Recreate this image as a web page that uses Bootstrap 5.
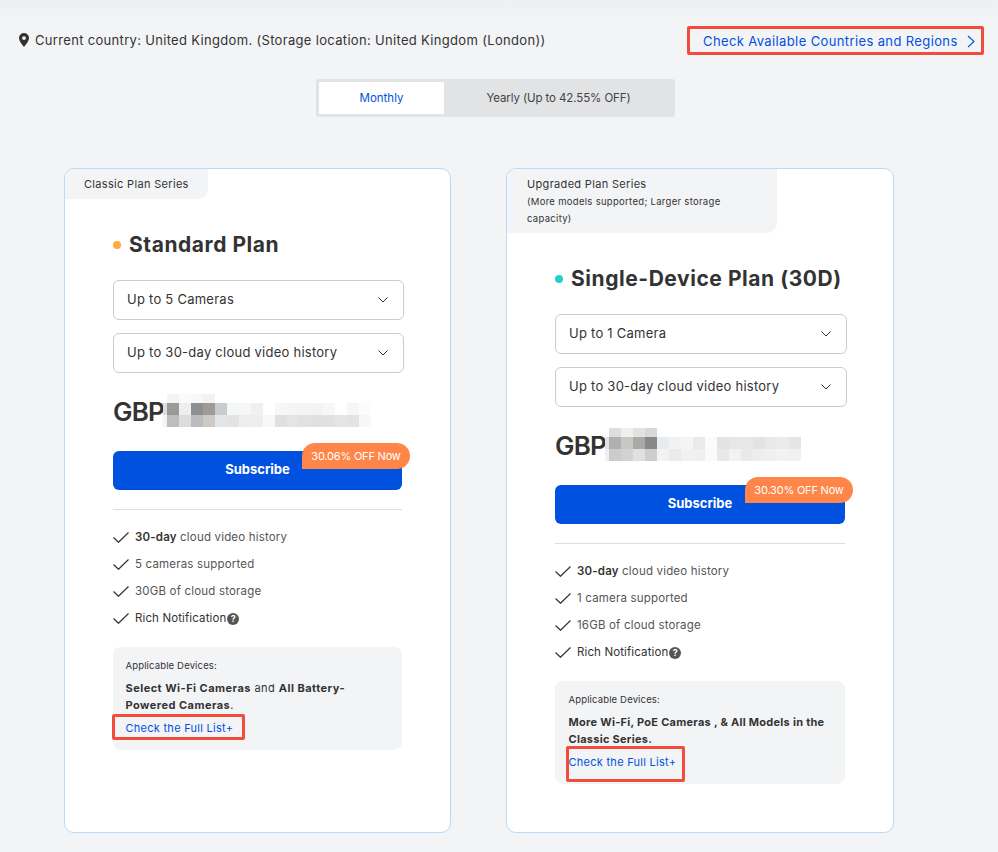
<!DOCTYPE html>
<html lang="en">
<head>
<meta charset="utf-8">
<title>Plans</title>
<link href="https://cdn.jsdelivr.net/npm/bootstrap@5.3.0/dist/css/bootstrap.min.css" rel="stylesheet">
<style>
html,body{height:852px;overflow:hidden}
body{font-family:"Inter","Liberation Sans",sans-serif;color:#333;background:linear-gradient(#eeeff0,#f3f4f6 24px);}
a{text-decoration:none;color:#0051e0}
.top-strip{padding:28px 14px 0 19px;height:79px}
.country{font-size:13px;letter-spacing:.32px;line-height:24px;gap:6px}
.country-link{font-size:13px;letter-spacing:.38px;line-height:25px;border:3px solid #f44b3f;border-radius:2px;width:297px;height:29px;padding:1px 6px 0 13px;margin-top:-2px}
.period-wrap{height:89px;padding-right:7px}
.period{width:359px;height:38px;background:#e2e3e5;border-radius:3px;padding:3px;font-size:11.5px}
.period-on{width:125px;background:#fff;color:#0051e0;padding-top:1px}
.period-off{color:#444;padding:1px 0 0 1px;letter-spacing:-.1px}
.plans{padding-left:64px;gap:55px}
.plan-card{width:388px;height:665px;border:1px solid #b5dbff;border-radius:10px;background:#fff;overflow:visible;flex:none}
.plan-card:first-child{width:387px}
.series-tab{background:#f3f4f6;border-radius:9px 0 10px 0;width:143px;height:30px;padding:0 0 0 19px;font-size:11px;line-height:30px;letter-spacing:.32px}
.series-tab.wide{width:270px;height:64px;padding:7px 50px 0 20px;line-height:16px}
.series-tab small{display:block;font-size:9.5px;line-height:17px;margin-top:1px;letter-spacing:.3px}
.plan-inner{padding:31px 48px 0 48px}
.plan-name{font-size:21px;font-weight:700;letter-spacing:.55px;line-height:32px;height:30px;margin:0 0 20px;gap:8px;color:#333;white-space:nowrap}
.plan-dot{width:8px;height:8px;border-radius:50%;display:inline-block}
.dot-a{background:#ffa940}
.dot-b{background:#22cfd0}
.plan-select{width:calc(100% + 2px);height:40px;background:#fff;border:1px solid #ccc;border-radius:6px;font-size:13px;letter-spacing:.25px;padding:0 15px 0 13px;margin-bottom:13px;color:#333}
.plan-select:last-of-type{margin-bottom:0}
.price{height:38px;margin-top:20px;font-size:26px;font-weight:600;color:#333;line-height:38px;letter-spacing:-.8px}
.price svg{display:block;margin-left:-1px}
.buy-wrap{margin-top:20px}
.buy{height:39px;background:#0051e0;border:0;border-radius:6px;color:#fff;font-size:13px;font-weight:700;padding:0 0 2px}
.buy:hover{background:#0051e0;color:#fff}
.off-tag{position:absolute;top:-8px;right:-8px;width:108px;height:26px;background:#ff8549;color:#fff;font-size:11px;letter-spacing:-.2px;line-height:26px;text-align:center;border-radius:13px 13px 13px 0}
.plan-rule{margin:19px 0 14px;border:0;border-top:1px solid #ddd;opacity:1}
.perks{margin:0 0 15px;padding:0;list-style:none;font-size:11.5px;letter-spacing:.18px;color:#555}
.perks li{height:27px;line-height:27px;gap:6px}
.perks b{font-weight:600;color:#333}
.perks .rich{color:#333;letter-spacing:.12px}
.ask{width:12px;height:12px;border-radius:50%;background:#555;color:#fff;font-size:9px;font-weight:700;line-height:12px;text-align:center;display:inline-block;margin-left:1px;letter-spacing:0}
.fit-box{background:#f3f4f6;border-radius:8px;height:103px;padding:11px 13px 0 12.5px;position:relative}
.fit-box.alt{padding-left:13.5px}
.fit-label{font-size:9.5px;line-height:16px;color:#333;letter-spacing:.15px}
.fit-text{font-size:11px;letter-spacing:.27px;line-height:17px;margin:5.5px 0 5.5px;color:#333}
.fit-box:not(.alt) .fit-text{letter-spacing:.47px}
.fit-text b{font-weight:700}
.fit-link{font-size:11px;line-height:18px;display:block;letter-spacing:.27px}
.mark-a,.mark-b{position:absolute;border:3px solid #f44b3f;border-radius:2px;pointer-events:none}
.mark-a{left:-1px;top:67px;width:133px;height:26px}
.mark-b{left:11px;top:65px;width:119px;height:36px}
</style>
</head>
<body>
<div class="top-strip d-flex justify-content-between align-items-start">
  <div class="country d-flex align-items-center">
    <svg width="10" height="14" viewBox="0 0 10 14" aria-hidden="true"><path fill="#333" fill-rule="evenodd" d="M5 0a5 5 0 0 1 5 5c0 3-3 6.500-5 9-2-2.500-5-6-5-9a5 5 0 0 1 5-5zm0 3.200a1.900 1.900 0 1 0 0 3.800 1.900 1.900 0 0 0 0-3.800z"/></svg>
    <span>Current country: United Kingdom. (Storage location: United Kingdom (London))</span>
  </div>
  <a href="#" class="country-link d-flex justify-content-between align-items-center">
    <span>Check Available Countries and Regions</span>
    <svg width="8" height="13" viewBox="0 0 8 13" aria-hidden="true"><path d="M1 1l6 5.500-6 5.500" fill="none" stroke="#0051e0" stroke-width="1.100"/></svg>
  </a>
</div>
<div class="period-wrap d-flex justify-content-center align-items-start">
  <div class="period d-flex">
    <div class="period-on d-flex align-items-center justify-content-center">Monthly</div>
    <div class="period-off flex-grow-1 d-flex align-items-center justify-content-center">Yearly (Up to 42.55% OFF)</div>
  </div>
</div>
<div class="plans d-flex align-items-start">
  <div class="card plan-card">
    <div class="series-tab">Classic Plan Series</div>
    <div class="plan-inner">
      <h2 class="plan-name d-flex align-items-center"><i class="plan-dot dot-a"></i>Standard Plan</h2>
      <button class="btn plan-select d-flex justify-content-between align-items-center"><span>Up to 5 Cameras</span><svg width="10" height="6" viewBox="0 0 10 6"><path d="M.5.500l4.500 4.500 4.500-4.500" fill="none" stroke="#333" stroke-width="1"/></svg></button>
      <button class="btn plan-select d-flex justify-content-between align-items-center"><span>Up to 30-day cloud video history</span><svg width="10" height="6" viewBox="0 0 10 6"><path d="M.5.500l4.500 4.500 4.500-4.500" fill="none" stroke="#333" stroke-width="1"/></svg></button>
      <div class="price d-flex align-items-start">GBP
        <svg width="208" height="38" viewBox="0 0 208 38" aria-hidden="true">
          <g transform="translate(1,1)" shape-rendering="crispEdges">
            <rect x="3" y="0" width="12" height="9" fill="#f3f3f3"/><rect x="15" y="0" width="12" height="9" fill="#fbfbfb"/><rect x="27" y="0" width="12" height="9" fill="#f7f7f7"/><rect x="39" y="0" width="12" height="9" fill="#f2f2f2"/>
            <rect x="-1" y="9" width="4" height="12" fill="#dddddd"/><rect x="3" y="9" width="12" height="12" fill="#9a9a9b"/><rect x="15" y="9" width="12" height="12" fill="#f0eeec"/><rect x="27" y="9" width="12" height="12" fill="#8e8f91"/><rect x="39" y="9" width="12" height="12" fill="#a09a94"/><rect x="51" y="9" width="12" height="12" fill="#c8ccd0"/><rect x="63" y="9" width="12" height="12" fill="#f5f6f6"/><rect x="75" y="9" width="12" height="12" fill="#f7f7f7"/><rect x="87" y="9" width="12" height="12" fill="#f0f0f1"/><rect x="111" y="9" width="12" height="12" fill="#f7f7f7"/><rect x="123" y="9" width="12" height="12" fill="#f5f5f5"/><rect x="135" y="9" width="12" height="12" fill="#f4f4f4"/><rect x="147" y="9" width="12" height="12" fill="#f3f3f3"/><rect x="159" y="9" width="12" height="12" fill="#f7f7f7"/><rect x="183" y="9" width="12" height="12" fill="#f6f6f6"/><rect x="195" y="9" width="12" height="12" fill="#fcfcfc"/>
            <rect x="-1" y="21" width="4" height="12" fill="#f4f4f4"/><rect x="3" y="21" width="12" height="12" fill="#bdbdbe"/><rect x="15" y="21" width="12" height="12" fill="#dcdcdb"/><rect x="27" y="21" width="12" height="12" fill="#bcbcbe"/><rect x="39" y="21" width="12" height="12" fill="#cdc9c5"/><rect x="51" y="21" width="12" height="12" fill="#e4e5e6"/><rect x="63" y="21" width="12" height="12" fill="#e2e3e4"/><rect x="75" y="21" width="12" height="12" fill="#ededec"/><rect x="87" y="21" width="12" height="12" fill="#eeeeee"/><rect x="99" y="21" width="12" height="12" fill="#f8f8f8"/><rect x="111" y="21" width="12" height="12" fill="#e0e0e0"/><rect x="123" y="21" width="12" height="12" fill="#e4e4e3"/><rect x="135" y="21" width="12" height="12" fill="#e1e1e1"/><rect x="147" y="21" width="12" height="12" fill="#e0e0e0"/><rect x="159" y="21" width="12" height="12" fill="#e1e1e2"/><rect x="171" y="21" width="12" height="12" fill="#e5e5e7"/><rect x="183" y="21" width="12" height="12" fill="#e3e3e3"/><rect x="195" y="21" width="12" height="12" fill="#f7f7f7"/>
          </g>
        </svg>
      </div>
      <div class="buy-wrap position-relative">
        <button class="btn buy w-100">Subscribe</button>
        <span class="off-tag">30.06% OFF Now</span>
      </div>
      <hr class="plan-rule">
      <ul class="perks">
        <li class="d-flex align-items-center"><svg width="16" height="11" viewBox="0 0 16 11"><path d="M.5 5.500l5 4.800L15.500.5" fill="none" stroke="#333" stroke-width="1.200"/></svg><span><b>30-day</b> cloud video history</span></li>
        <li class="d-flex align-items-center"><svg width="16" height="11" viewBox="0 0 16 11"><path d="M.5 5.500l5 4.800L15.500.5" fill="none" stroke="#333" stroke-width="1.200"/></svg><span>5 cameras supported</span></li>
        <li class="d-flex align-items-center"><svg width="16" height="11" viewBox="0 0 16 11"><path d="M.5 5.500l5 4.800L15.500.5" fill="none" stroke="#333" stroke-width="1.200"/></svg><span>30GB of cloud storage</span></li>
        <li class="d-flex align-items-center"><svg width="16" height="11" viewBox="0 0 16 11"><path d="M.5 5.500l5 4.800L15.500.5" fill="none" stroke="#333" stroke-width="1.200"/></svg><span class="rich d-flex align-items-center">Rich Notification<i class="ask fst-normal">?</i></span></li>
      </ul>
      <div class="fit-box">
        <div class="fit-label">Applicable Devices:</div>
        <div class="fit-text"><b>Select Wi-Fi Cameras</b> and <b>All Battery-</b><br><b>Powered Cameras</b>.</div>
        <a href="#" class="fit-link">Check the Full List+</a>
        <span class="mark-a"></span>
      </div>
    </div>
  </div>
  <div class="card plan-card">
    <div class="series-tab wide">Upgraded Plan Series<small>(More models supported; Larger storage capacity)</small></div>
    <div class="plan-inner">
      <h2 class="plan-name d-flex align-items-center"><i class="plan-dot dot-b"></i>Single-Device Plan (30D)</h2>
      <button class="btn plan-select d-flex justify-content-between align-items-center"><span>Up to 1 Camera</span><svg width="10" height="6" viewBox="0 0 10 6"><path d="M.5.500l4.500 4.500 4.500-4.500" fill="none" stroke="#333" stroke-width="1"/></svg></button>
      <button class="btn plan-select d-flex justify-content-between align-items-center"><span>Up to 30-day cloud video history</span><svg width="10" height="6" viewBox="0 0 10 6"><path d="M.5.500l4.500 4.500 4.500-4.500" fill="none" stroke="#333" stroke-width="1"/></svg></button>
      <div class="price d-flex align-items-start">GBP
        <svg width="208" height="38" viewBox="0 0 208 38" aria-hidden="true">
          <g transform="translate(1,1)" shape-rendering="crispEdges">
            <rect x="3" y="0" width="12" height="9" fill="#dcddde"/><rect x="15" y="0" width="12" height="9" fill="#f0efee"/><rect x="27" y="0" width="12" height="9" fill="#e0e2e4"/><rect x="39" y="0" width="12" height="9" fill="#d8d8d8"/>
            <rect x="-1" y="9" width="4" height="12" fill="#e3e3e3"/><rect x="3" y="9" width="12" height="12" fill="#b0b0b1"/><rect x="15" y="9" width="12" height="12" fill="#c8c7c4"/><rect x="27" y="9" width="12" height="12" fill="#aba9a7"/><rect x="39" y="9" width="12" height="12" fill="#88878a"/><rect x="51" y="9" width="12" height="12" fill="#e8ecee"/><rect x="63" y="9" width="12" height="12" fill="#f1f2f2"/><rect x="75" y="9" width="12" height="12" fill="#f4f4f4"/><rect x="87" y="9" width="12" height="12" fill="#e8eaec"/><rect x="99" y="9" width="12" height="12" fill="#fbfbfb"/><rect x="111" y="9" width="12" height="12" fill="#e3e3e4"/><rect x="123" y="9" width="12" height="12" fill="#e7e7e6"/><rect x="135" y="9" width="12" height="12" fill="#e6e7e9"/><rect x="147" y="9" width="12" height="12" fill="#e3e3e4"/><rect x="159" y="9" width="12" height="12" fill="#e9e9ea"/><rect x="171" y="9" width="12" height="12" fill="#ebebec"/><rect x="183" y="9" width="12" height="12" fill="#e4e5e6"/>
            <rect x="-1" y="21" width="4" height="12" fill="#f0f0f0"/><rect x="3" y="21" width="12" height="12" fill="#cbccce"/><rect x="15" y="21" width="12" height="12" fill="#d3d1d1"/><rect x="27" y="21" width="12" height="12" fill="#dfe0e2"/><rect x="39" y="21" width="12" height="12" fill="#cdcdcd"/><rect x="51" y="21" width="12" height="12" fill="#f4f3f2"/><rect x="63" y="21" width="12" height="12" fill="#eaebeb"/><rect x="75" y="21" width="12" height="12" fill="#f1f1f1"/><rect x="87" y="21" width="12" height="12" fill="#eff0f0"/><rect x="99" y="21" width="12" height="12" fill="#fafafa"/><rect x="111" y="21" width="12" height="12" fill="#e8e8e9"/><rect x="123" y="21" width="12" height="12" fill="#f2f2f2"/><rect x="135" y="21" width="12" height="12" fill="#e9eaeb"/><rect x="147" y="21" width="12" height="12" fill="#edeeee"/><rect x="159" y="21" width="12" height="12" fill="#f0f0f0"/><rect x="171" y="21" width="12" height="12" fill="#f2f3f3"/><rect x="183" y="21" width="12" height="12" fill="#f1f1f1"/>
          </g>
        </svg>
      </div>
      <div class="buy-wrap position-relative">
        <button class="btn buy w-100">Subscribe</button>
        <span class="off-tag">30.30% OFF Now</span>
      </div>
      <hr class="plan-rule">
      <ul class="perks">
        <li class="d-flex align-items-center"><svg width="16" height="11" viewBox="0 0 16 11"><path d="M.5 5.500l5 4.800L15.500.5" fill="none" stroke="#333" stroke-width="1.200"/></svg><span><b>30-day</b> cloud video history</span></li>
        <li class="d-flex align-items-center"><svg width="16" height="11" viewBox="0 0 16 11"><path d="M.5 5.500l5 4.800L15.500.5" fill="none" stroke="#333" stroke-width="1.200"/></svg><span>1 camera supported</span></li>
        <li class="d-flex align-items-center"><svg width="16" height="11" viewBox="0 0 16 11"><path d="M.5 5.500l5 4.800L15.500.5" fill="none" stroke="#333" stroke-width="1.200"/></svg><span>16GB of cloud storage</span></li>
        <li class="d-flex align-items-center"><svg width="16" height="11" viewBox="0 0 16 11"><path d="M.5 5.500l5 4.800L15.500.5" fill="none" stroke="#333" stroke-width="1.200"/></svg><span class="rich d-flex align-items-center">Rich Notification<i class="ask fst-normal">?</i></span></li>
      </ul>
      <div class="fit-box alt">
        <div class="fit-label">Applicable Devices:</div>
        <div class="fit-text"><b>More Wi-Fi, PoE Cameras , &amp; All Models in the Classic Series.</b></div>
        <a href="#" class="fit-link">Check the Full List+</a>
        <span class="mark-b"></span>
      </div>
    </div>
  </div>
</div>
<script src="https://cdn.jsdelivr.net/npm/bootstrap@5.3.0/dist/js/bootstrap.bundle.min.js"></script>
</body>
</html>
